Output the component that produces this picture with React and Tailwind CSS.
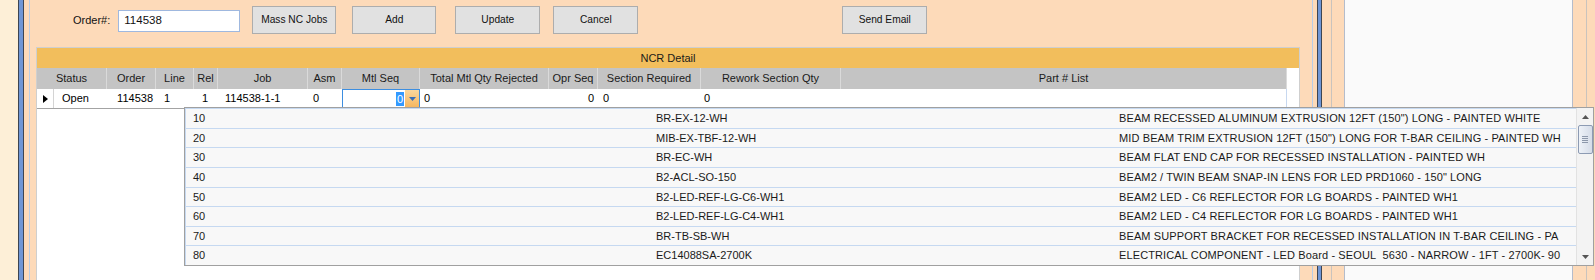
import React from "react";

const headers = [
  { label: "Status", w: "w-[70px]" },
  { label: "Order", w: "w-[49px]" },
  { label: "Line", w: "w-[38px]" },
  { label: "Rel", w: "w-[24px]" },
  { label: "Job", w: "w-[90px]" },
  { label: "Asm", w: "w-[34px]" },
  { label: "Mtl Seq", w: "w-[78px]" },
  { label: "Total Mtl Qty Rejected", w: "w-[129px]" },
  { label: "Opr Seq", w: "w-[49px]" },
  { label: "Section Required", w: "w-[103px]" },
  { label: "Rework Section Qty", w: "w-[140px]" },
  { label: "Part # List", w: "w-[446px]" },
];

const items = [
  ["10", "BR-EX-12-WH", "BEAM RECESSED ALUMINUM EXTRUSION 12FT (150\") LONG - PAINTED WHITE"],
  ["20", "MIB-EX-TBF-12-WH", "MID BEAM TRIM EXTRUSION 12FT (150\") LONG FOR T-BAR CEILING - PAINTED WH"],
  ["30", "BR-EC-WH", "BEAM FLAT END CAP FOR RECESSED INSTALLATION - PAINTED WH"],
  ["40", "B2-ACL-SO-150", "BEAM2 / TWIN BEAM SNAP-IN LENS FOR LED PRD1060 - 150\" LONG"],
  ["50", "B2-LED-REF-LG-C6-WH1", "BEAM2 LED - C6 REFLECTOR FOR LG BOARDS - PAINTED WH1"],
  ["60", "B2-LED-REF-LG-C4-WH1", "BEAM2 LED - C4 REFLECTOR FOR LG BOARDS - PAINTED WH1"],
  ["70", "BR-TB-SB-WH", "BEAM SUPPORT BRACKET FOR RECESSED INSTALLATION IN T-BAR CEILING - PA"],
  ["80", "EC14088SA-2700K", "ELECTRICAL COMPONENT - LED Board - SEOUL\u00a0 5630 - NARROW - 1FT - 2700K- 90"],
];

function Btn({ children, w, ml }) {
  return (
    <div
      className={`${w} ${ml} mt-[6px] h-[28px] flex items-center justify-center border border-[#adadad] bg-[#e1e1e1] text-[10.2px] text-[#111]`}
    >
      {children}
    </div>
  );
}

function Splitter() {
  return (
    <div className="flex h-full">
      <div className="w-[1px] bg-[#3d4552]" />
      <div className="w-[3px] bg-[#6f96d6]" />
      <div className="w-[1px] bg-[#3d4552]" />
    </div>
  );
}

export default function App() {
  return (
    <div className="relative w-[1595px] h-[280px] overflow-hidden flex font-['Liberation_Sans',Arial,sans-serif] text-[11px] text-[#111] bg-[#fddab9]">
      {/* left strip */}
      <div className="w-[18px] h-full bg-[#fdefd7]" />
      <div className="flex h-full">
        <div className="w-[1px] bg-[#3d4552]" />
        <div className="w-[4px] bg-[#6f96d6]" />
        <div className="w-[1px] bg-[#3d4552]" />
      </div>
      <div className="w-[5px] h-full bg-[#fddab9]" />
      <div className="w-[1px] h-full bg-[#b9cde6]" />

      {/* main panel */}
      <div className="w-[1282px] h-full flex flex-col bg-[#fddab9]">
        <div className="h-[47px] flex items-start shrink-0">
          <div className="ml-[43px] mt-[6px] h-[28px] leading-[28px] text-[11px] text-[#111]">Order#:</div>
          <div className="ml-[8px] mt-[10px] w-[122px] h-[22px] border border-[#9fb8df] bg-white pl-[5px] flex items-center text-[11.5px] text-[#111]">
            114538
          </div>
          <Btn w="w-[84px]" ml="ml-[12px]">Mass NC Jobs</Btn>
          <Btn w="w-[84px]" ml="ml-[16px]">Add</Btn>
          <Btn w="w-[85px]" ml="ml-[19px]">Update</Btn>
          <Btn w="w-[85px]" ml="ml-[13px]">Cancel</Btn>
          <Btn w="w-[85px]" ml="ml-[204px]">Send Email</Btn>
        </div>

        {/* grid */}
        <div className="ml-[6px] w-[1264px] flex-1 flex flex-col bg-white border-r border-l border-t border-[#cfcfcf]">
          <div className="h-[20px] shrink-0 bg-[#f2be5c] flex items-center justify-center text-[11px] text-[#1a1a1a]">
            NCR Detail
          </div>
          <div className="h-[21px] shrink-0 flex">
            {headers.map((h) => (
              <div
                key={h.label}
                className={`${h.w} h-full bg-[#c4c4c4] border-r border-[#dadada] flex items-center justify-center whitespace-nowrap text-[#1a1a1a]`}
              >
                {h.label}
              </div>
            ))}
            <div className="flex-1 h-full bg-white" />
          </div>
          {/* data row */}
          <div className="h-[20px] shrink-0 flex border-b border-[#a3a3a3] text-[11px] text-black">
            <div className="w-[17px] h-full border-r border-[#d4d4d4] flex items-center pl-[6px]">
              <svg width="5" height="8" viewBox="0 0 5 8">
                <path d="M0 0 L5 4 L0 8 Z" fill="#000" />
              </svg>
            </div>
            <div className="w-[53px] h-full flex items-center pl-[8px]">Open</div>
            <div className="w-[49px] h-full flex items-center justify-end pr-[3px]">114538</div>
            <div className="w-[38px] h-full flex items-center pl-[8px]">1</div>
            <div className="w-[24px] h-full flex items-center pl-[8px]">1</div>
            <div className="w-[90px] h-full flex items-center pl-[7px]">114538-1-1</div>
            <div className="w-[34px] h-full flex items-center pl-[5px]">0</div>
            <div className="w-[78px] h-full flex border border-[#3d8ee0]">
              <div className="flex-1 flex items-center justify-end pr-[1px]">
                <span className="bg-[#3399ff] text-white leading-[14px] px-[1px]">0</span>
              </div>
              <div className="w-[14px] h-full bg-gradient-to-b from-[#fbd79c] to-[#f5b760] flex items-center justify-center">
                <svg width="7" height="4" viewBox="0 0 7 4">
                  <path d="M0 0 L7 0 L3.5 4 Z" fill="#3b6fb6" />
                </svg>
              </div>
            </div>
            <div className="w-[129px] h-full flex items-center pl-[4px]">0</div>
            <div className="w-[49px] h-full flex items-center justify-end pr-[4px]">0</div>
            <div className="w-[103px] h-full flex items-center pl-[5px]">0</div>
            <div className="w-[140px] h-full flex items-center pl-[3px]">0</div>
            <div className="w-[446px] h-full border-r border-[#c7d8f0]" />
            <div className="flex-1 h-full" />
          </div>
          <div className="flex-1" />
        </div>
      </div>

      {/* right area */}
      <div className="w-[1px] h-full bg-[#b9cde6]" />
      <div className="w-[4px] h-full bg-[#fddab9]" />
      <Splitter />
      <div className="w-[9px] h-full bg-[#fddab9]" />
      <div className="w-[1px] h-full bg-[#c9c3bd]" />
      <div className="w-[12px] h-full bg-[#fddab9]" />
      <div className="w-[1px] h-full bg-[#b4bccb]" />
      <div className="w-[227px] h-full bg-[#fafafa]" />
      <div className="w-[1px] h-full bg-[#b4bccb]" />
      <div className="w-[13px] h-full bg-[#fddab9]" />
      <div className="w-[1px] h-full bg-[#c9c3bd]" />
      <div className="flex-1 h-full bg-[#fddab9]" />

      {/* dropdown overlay */}
      <div className="absolute left-[184px] top-[107px] w-[1410px] h-[159px] border border-[#a0a0a0] bg-[#f8f8f8] flex">
        <div className="flex-1 flex flex-col border-l border-t border-[#c6d9f1]">
          {items.map(([a, b, c]) => (
            <div key={a} className="flex-1 flex items-center border-b border-[#c6d9f1] text-[11px] text-[#1a1a1a] whitespace-nowrap last:border-b-0">
              <div className="w-[463px] pl-[7px]">{a}</div>
              <div className="w-[464px] pl-[7px]">{b}</div>
              <div className="w-[452px] pl-[6px] tracking-[0.12px]">{c}</div>
            </div>
          ))}
        </div>
        {/* scrollbar */}
        <div className="w-[17px] h-full bg-[#f3f3f3] border-l border-[#e2e2e2] flex flex-col items-center">
          <div className="h-[17px] w-full flex items-center justify-center">
            <svg width="7" height="4" viewBox="0 0 7 4">
              <path d="M0 4 L7 4 L3.5 0 Z" fill="#555" />
            </svg>
          </div>
          <div className="w-[15px] h-[29px] rounded-[2px] border border-[#8d9bb3] bg-gradient-to-r from-[#eef2f8] to-[#d5dce8] flex flex-col items-center justify-center gap-[1px]">
            <div className="w-[6px] h-[1px] bg-[#8c97aa]" />
            <div className="w-[6px] h-[1px] bg-[#8c97aa]" />
            <div className="w-[6px] h-[1px] bg-[#8c97aa]" />
            <div className="w-[6px] h-[1px] bg-[#8c97aa]" />
          </div>
          <div className="flex-1" />
          <div className="h-[17px] w-full flex items-center justify-center">
            <svg width="7" height="4" viewBox="0 0 7 4">
              <path d="M0 0 L7 0 L3.5 4 Z" fill="#555" />
            </svg>
          </div>
        </div>
      </div>
    </div>
  );
}
